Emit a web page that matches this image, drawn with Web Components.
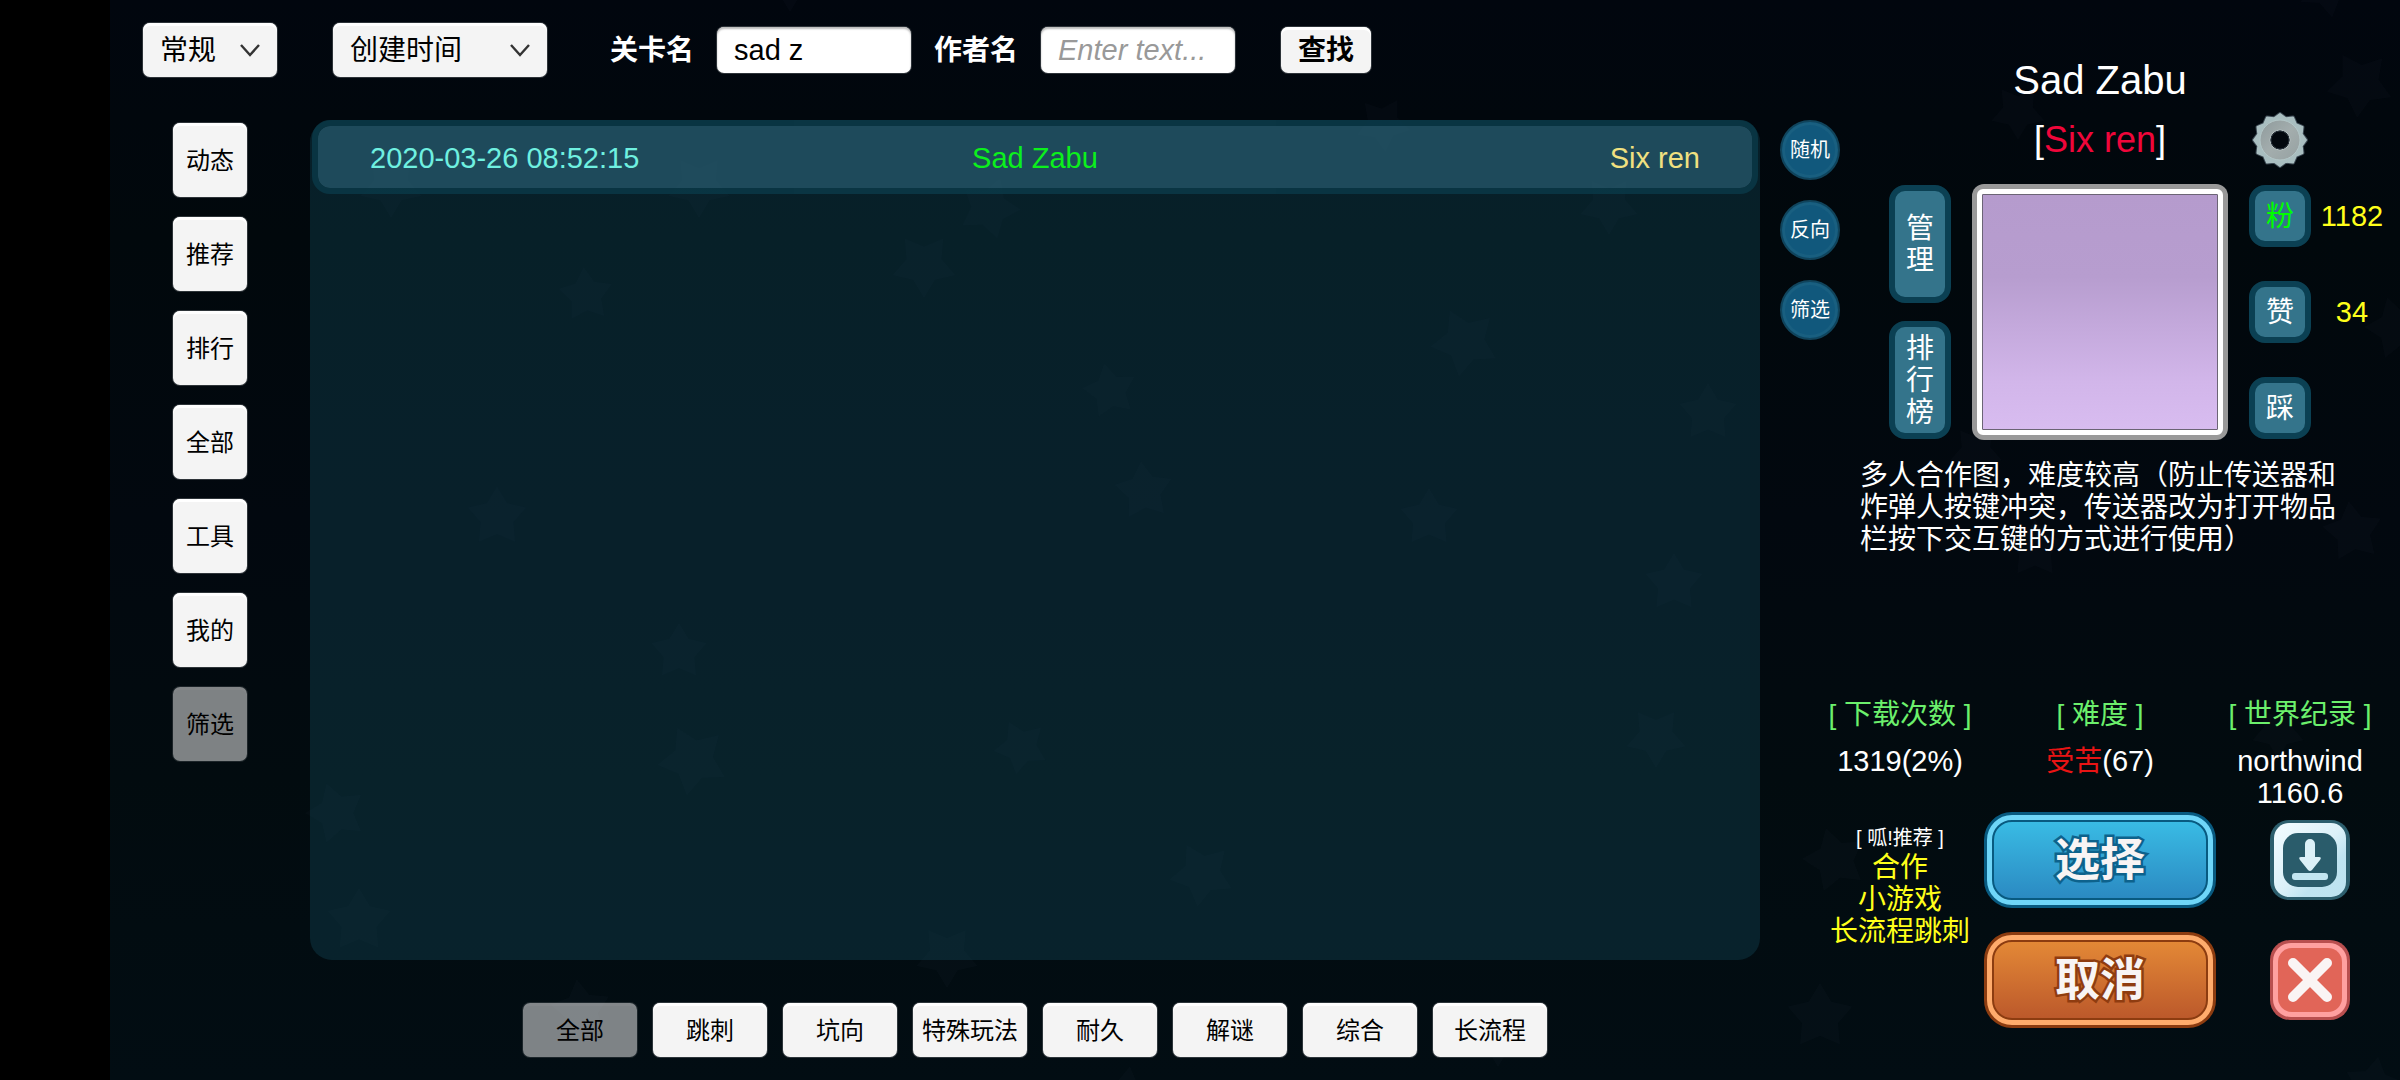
<!DOCTYPE html>
<html lang="zh-CN">
<head>
<meta charset="utf-8">
<meta name="viewport" content="width=device-width, initial-scale=1">
<title>关卡列表</title>
<style>
  body {
    margin: 0;
    background: #000;
    color: #fff;
    font: 28px/32px "Liberation Sans", "Noto Sans CJK SC", sans-serif;
  }
</style>
</head>
<body>
<level-browser>
  <search-bar slot="search"></search-bar>

  <menu-bar slot="nav" direction="column">
    <menu-button>动态</menu-button>
    <menu-button>推荐</menu-button>
    <menu-button>排行</menu-button>
    <menu-button>全部</menu-button>
    <menu-button>工具</menu-button>
    <menu-button>我的</menu-button>
    <menu-button active>筛选</menu-button>
  </menu-bar>

  <level-list slot="list"></level-list>

  <menu-bar slot="tabs">
    <menu-button active>全部</menu-button>
    <menu-button>跳刺</menu-button>
    <menu-button>坑向</menu-button>
    <menu-button>特殊玩法</menu-button>
    <menu-button>耐久</menu-button>
    <menu-button>解谜</menu-button>
    <menu-button>综合</menu-button>
    <menu-button>长流程</menu-button>
  </menu-bar>

  <div slot="tools">
    <round-button>随机</round-button>
    <round-button>反向</round-button>
    <round-button>筛选</round-button>
  </div>

  <level-profile slot="profile" name="Sad Zabu" author="Six ren">
    <tile-button slot="left" tall>管理</tile-button>
    <tile-button slot="left" tall>排行榜</tile-button>
    <tile-button slot="votes" count="1182" style="--tile-color: #00ff00">粉</tile-button>
    <tile-button slot="votes" count="34">赞</tile-button>
    <tile-button slot="votes">踩</tile-button>
    多人合作图，难度较高（防止传送器和炸弹人按键冲突，传送器改为打开物品栏按下交互键的方式进行使用）
  </level-profile>

  <level-stats slot="stats"></level-stats>
</level-browser>

<script>
const define = (name, html, setup) => {
  const template = document.createElement('template');
  template.innerHTML = html;
  customElements.define(name, class extends HTMLElement {
    constructor() {
      super();
      this.attachShadow({ mode: 'open' });
      this.shadowRoot.appendChild(template.content.cloneNode(true));
    }

    connectedCallback() {
      if (setup) setup(this, this.shadowRoot);
    }
  });
};

// centre x, centre y, radius, rotation
const STARS = [
  [790, -16, 28, 180], [2327, -12, 30, 170], [2360, 84, 34, 185], [2018, 112, 28, 180],
  [1383, 124, 28, 175], [391, 186, 32, 180], [699, 186, 32, 180], [989, 208, 32, 165],
  [1609, 205, 30, 180], [924, 265, 33, 180], [586, 295, 28, -5], [1465, 342, 35, 190],
  [1110, 391, 28, -12], [1708, 413, 30, 0], [2396, 328, 32, 200], [1144, 491, 30, -6],
  [1429, 518, 30, 0], [497, 517, 31, 0], [1976, 452, 27, 180], [2353, 532, 31, -8],
  [2035, 549, 30, 0], [1674, 583, 30, 0], [679, 652, 29, 0], [2278, 732, 27, 180],
  [1656, 737, 31, 180], [1021, 747, 28, 190], [693, 760, 36, 190], [336, 813, 31, 198],
  [1835, 860, 33, 200], [1202, 874, 33, 188], [359, 921, 33, 0], [947, 956, 32, 180],
  [581, 1010, 31, -8], [1820, 1017, 34, 0], [1498, 1038, 29, 180], [1126, 1094, 28, 8],
  [2373, 1086, 30, 10]
];

const starPoints = [...Array(10)].map((_, i) => {
  const r = i % 2 ? 0.56 : 1;
  const a = (i * 36 - 90) * Math.PI / 180;
  return `${(r * Math.cos(a)).toFixed(3)},${(r * Math.sin(a)).toFixed(3)}`;
}).join(' ');

define('starry-sky', `
  <style>
    :host { display: block; overflow: hidden; background: linear-gradient(#01060e, #01080c 22%, #02080f 48%, #020b0f 72%, #020d13); }
    svg { display: block; width: 100%; height: 100%; }
    polygon { fill: #9fb4d0; fill-opacity: .025; stroke: none; }
  </style>
  <svg viewBox="110 0 2290 1080" preserveAspectRatio="xMidYMid slice" aria-hidden="true"></svg>
`, (el, root) => {
  root.querySelector('svg').innerHTML = STARS.map(([x, y, r, a]) =>
    `<polygon points="${starPoints}" transform="translate(${x} ${y}) rotate(${a}) scale(${r})"/>`).join('');
});

define('level-browser', `
  <style>
    :host {
      position: relative;
      box-sizing: border-box;
      display: grid;
      grid-template-columns: 200px minmax(0, 1fr) 640px;
      grid-template-rows: 120px minmax(0, 1fr) 120px;
      min-height: 100vh;
      padding-left: 110px;
    }
    /* backdrop behind everything except the notch strip */
    starry-sky { position: absolute; inset: 0 0 0 110px; z-index: -1; }
    .search { grid-column: 1 / 3; }
    .tabs { grid-column: 2; grid-row: 3; display: flex; align-items: center; justify-content: center; padding-top: 20px; }
    .list { grid-column: 2; grid-row: 2; display: grid; }
    .nav { grid-column: 1; grid-row: 2; padding: 3px 0 0 63px; }
    .side { grid-column: 3; grid-row: 1 / 4; }
    .top { display: flex; }
    .tools { flex: 0 0 80px; padding: 120px 0 0 20px; box-sizing: border-box; }
    .profile { flex: 1; }
  </style>
  <starry-sky></starry-sky>
  <div class="search"><slot name="search"></slot></div>
  <nav class="nav"><slot name="nav"></slot></nav>
  <main class="list"><slot name="list"></slot></main>
  <div class="tabs"><slot name="tabs"></slot></div>
  <aside class="side">
    <div class="top">
      <div class="tools"><slot name="tools"></slot></div>
      <div class="profile"><slot name="profile"></slot></div>
    </div>
    <slot name="stats"></slot>
  </aside>
`);

define('search-bar', `
  <style>
    :host { display: block; }
    form { display: flex; align-items: center; padding: 23px 0 0 33px; }
    .select { position: relative; margin-right: 56px; }
    select, input, button {
      box-sizing: border-box;
      margin: 0;
      border: 0;
      border-radius: 7px;
      font: inherit;
      color: #000;
      background: #f4f4f4;
      box-shadow: 0 0 0 1px rgba(90, 96, 100, .5), inset 0 3px #fff;
    }
    select { display: block; appearance: none; height: 54px; padding: 2px 17px 0; }
    .mode { width: 134px; }
    .order { width: 214px; }
    .select svg { position: absolute; right: 17px; top: 21px; pointer-events: none; }
    label { font-weight: bold; margin-right: 23px; padding-top: 2px; }
    .select + label { margin-left: 7px; }
    input {
      width: 194px; height: 46px; padding: 0 17px; margin-right: 23px;
      background: #fff; font-size: 29px;
      box-shadow: 0 0 0 1px rgba(90, 96, 100, .5), inset 0 2px 2px #bbb;
    }
    input::placeholder { color: #999; font-style: italic; opacity: 1; }
    button { width: 90px; height: 46px; padding: 2px 0 0; margin-left: 23px; font-weight: bold; }
  </style>
  <form>
    <div class="select">
      <select class="mode" aria-label="模式"><option>常规</option></select>
      <svg width="20" height="14" viewBox="0 0 20 14"><path d="M1 1l9 10 9-10" fill="none" stroke="#333" stroke-width="2.4"/></svg>
    </div>
    <div class="select">
      <select class="order" aria-label="排序"><option>创建时间</option></select>
      <svg width="20" height="14" viewBox="0 0 20 14"><path d="M1 1l9 10 9-10" fill="none" stroke="#333" stroke-width="2.4"/></svg>
    </div>
    <label for="level">关卡名</label>
    <input id="level" type="text" value="sad z">
    <label for="author">作者名</label>
    <input id="author" type="text" placeholder="Enter text...">
    <button type="submit">查找</button>
  </form>
`, (el, root) => {
  root.querySelector('form').addEventListener('submit', (event) => event.preventDefault());
});

define('menu-bar', `
  <style>
    :host { display: flex; gap: 16px; --menu-width: 114px; --menu-height: 54px; }
    :host([direction=column]) { flex-direction: column; gap: 20px; --menu-width: 74px; --menu-height: 74px; }
  </style>
  <slot></slot>
`);

define('menu-button', `
  <style>
    :host { display: block; }
    button {
      display: block;
      box-sizing: border-box;
      width: var(--menu-width);
      height: var(--menu-height);
      padding: 2px 0 0;
      border: 0;
      border-radius: 7px;
      font: inherit;
      font-size: 24px;
      white-space: nowrap;
      color: #000;
      background: #f4f4f4;
      box-shadow: 0 0 0 1px rgba(90, 96, 100, .5), inset 0 3px #fff;
    }
    :host([active]) button {
      background: rgba(250, 250, 250, .5);
      box-shadow: 0 0 0 1px rgba(90, 96, 100, .3), inset 0 3px rgba(255, 255, 255, .04);
    }
  </style>
  <button type="button"><slot></slot></button>
`);

define('level-list', `
  <style>
    :host { display: block; box-sizing: border-box; padding: 0 2px; border-radius: 22px; background: rgba(21, 77, 94, .35); }
    table { width: 100%; border-spacing: 0; table-layout: fixed; font-size: 29px; }
    td {
      height: 60px;
      padding: 2px 0 0;
      background: rgba(46, 104, 125, .6);
      background-clip: padding-box;
      border: 0 solid rgba(11, 62, 78, .7);
      border-width: 6px 0;
    }
    td:first-child { border-left-width: 6px; border-radius: 18px 0 0 18px; padding-left: 52px; color: #6ff0e0; }
    td:nth-child(2) { text-align: center; color: #0cf01c; }
    td:last-child { border-right-width: 6px; border-radius: 0 18px 18px 0; padding-right: 52px; text-align: right; color: #f0e080; }
  </style>
  <table>
    <tr><td>2020-03-26 08:52:15</td><td>Sad Zabu</td><td>Six ren</td></tr>
  </table>
`);

define('round-button', `
  <style>
    :host { display: block; margin-bottom: 20px; }
    button {
      display: block;
      width: 60px;
      height: 60px;
      padding: 0;
      border: 2px solid #10445c;
      border-radius: 50%;
      background: #11587c;
      box-shadow: inset 0 0 0 3px #195f80;
      font: inherit;
      font-size: 20px;
      color: #fff;
    }
  </style>
  <button type="button"><slot></slot></button>
`);

define('tile-button', `
  <style>
    :host { display: flex; align-items: center; }
    button {
      flex: none;
      box-sizing: border-box;
      width: 62px;
      height: 62px;
      padding: 2px 11px 0;
      border: 6px solid #0b4053;
      border-radius: 16px;
      background: #34748b;
      font: inherit;
      color: var(--tile-color, #fff);
    }
    :host([tall]) button { height: 118px; }
    output { flex: 1; text-align: center; font-size: 29px; color: #ffff1a; }
  </style>
  <button type="button"><slot></slot></button>
  <output></output>
`, (el, root) => {
  root.querySelector('output').textContent = el.getAttribute('count') || '';
});

const gearPath = [...Array(24)].map((_, i) => {
  const r = i % 2 ? 22.5 : 26;
  const a = (i * 15 - 90) * Math.PI / 180;
  return `${i ? 'L' : 'M'}${(31 + r * Math.cos(a)).toFixed(1)} ${(28 + r * Math.sin(a)).toFixed(1)}`;
}).join('') + 'Z';

define('level-profile', `
  <style>
    :host { display: block; }
    .card {
      display: grid;
      grid-template-columns: 62px 256px 144px;
      column-gap: 21px;
      padding: 56px 0 0 49px;
    }
    h1, h2 { grid-column: 2; margin: 0; font-weight: normal; text-align: center; white-space: nowrap; }
    h1 { font-size: 40px; line-height: 48px; }
    h2 { font-size: 36px; line-height: 56px; margin: 8px 0 16px; }
    h2 span { color: #f0063a; }
    .settings { width: 62px; height: 56px; margin-top: 8px; padding: 0; border: 0; background: none; }
    .settings svg { display: block; }
    .left, .votes { display: flex; flex-direction: column; justify-content: space-between; padding: 1px 0; }
    .left { grid-column: 1; }
    .preview {
      box-sizing: border-box;
      height: 256px;
      padding: 5px;
      border-radius: 12px;
      background: #999;
    }
    .preview div {
      box-sizing: border-box;
      height: 100%;
      border: 5px solid #fff;
      border-radius: 6px;
      background: linear-gradient(#b59bcd, #b79dcf 35%, #d2b6ea 80%, #d8bcf0);
      box-shadow: inset 0 0 0 1px #6b6475;
    }
    p { width: 480px; min-height: 239px; margin: 20px 0 0 20px; }
  </style>
  <div class="card">
    <h1></h1>
    <h2>[<span></span>]</h2>
    <button class="settings" type="button" aria-label="设置">
      <svg width="62" height="56" viewBox="0 0 62 56">
        <defs>
          <linearGradient id="face" x2="1" y2="1"><stop offset="0" stop-color="#8f9a9c"/><stop offset=".5" stop-color="#a3adad"/><stop offset="1" stop-color="#96a1a2"/></linearGradient>
        </defs>
        <path d="${gearPath}" fill="none" stroke="#3a4650" stroke-width="4" stroke-linejoin="round"/>
        <path d="${gearPath}" fill="#a9bec0" stroke="#a9bec0" stroke-width="2" stroke-linejoin="round"/>
        <circle cx="31" cy="28" r="20" fill="url(#face)" stroke="#b4c7c8"/>
        <circle cx="31" cy="28" r="10" fill="#02070d" stroke="#b9c4c5"/>
        <circle cx="31" cy="28" r="9" fill="none" stroke="#2a333c"/>
      </svg>
    </button>
    <div class="left"><slot name="left"></slot></div>
    <div class="preview"><div></div></div>
    <div class="votes"><slot name="votes"></slot></div>
  </div>
  <p><slot></slot></p>
`, (el, root) => {
  root.querySelector('h1').textContent = el.getAttribute('name');
  root.querySelector('h2 span').textContent = el.getAttribute('author');
});

define('action-button', `
  <style>
    :host { display: block; --edge: #085a80; --ring: #6fd6f8; --from: #39bbe4; --to: #2b8ac2; --ink: #0d628c; }
    :host([kind=cancel]) { --edge: #8c3c10; --ring: #ffac6c; --from: #e38836; --to: #bc592b; --ink: #8f3c10; }
    button {
      display: block;
      width: 232px;
      height: 96px;
      padding: 5px;
      border: 3px solid var(--edge);
      border-radius: 28px;
      background: var(--ring);
      font: bold 45px/46px "Noto Sans CJK SC", sans-serif;
      color: #f8f4f4;
    }
    span {
      display: grid;
      place-items: center;
      box-sizing: border-box;
      height: 100%;
      padding-bottom: 6px;
      border: 2px solid var(--edge);
      border-radius: 20px;
      background: linear-gradient(var(--from), var(--to));
      -webkit-text-stroke: 5px var(--ink);
      stroke-linejoin: round;
      paint-order: stroke fill;
    }
  </style>
  <button type="button"><span><slot></slot></span></button>
`);

define('level-stats', `
  <style>
    :host { display: block; padding-left: 40px; }
    dl, .actions { display: grid; grid-template-columns: repeat(3, minmax(0, 1fr)); margin: 0; text-align: center; }
    dt { color: #6cf06c; }
    dd { margin: 14px 0 3px; min-height: 64px; font-size: 29px; }
    dd div { white-space: nowrap; }
    .hard { font-size: 28px; color: #e81414; }
    .tags { padding-top: 12px; color: #ffff1a; white-space: nowrap; }
    .tags h3 { margin: 0; font-size: 20px; line-height: 28px; font-weight: normal; color: #fff; }
    .tags ul { margin: 0; padding: 0; list-style: none; }
    .main, .icons { display: flex; flex-direction: column; align-items: center; gap: 24px; }
    .icons { gap: 40px; padding: 8px 0 0 20px; }
    .icons button { width: 80px; height: 80px; padding: 0; border: 0; background: none; }
    .icons svg { display: block; }
  </style>
  <dl>
    <div><dt>[ 下载次数 ]</dt><dd>1319(2%)</dd></div>
    <div><dt>[ 难度 ]</dt><dd><span class="hard">受苦</span>(67)</dd></div>
    <div><dt>[ 世界纪录 ]</dt><dd><div>northwind</div><div>1160.6</div></dd></div>
  </dl>
  <div class="actions">
    <div class="tags">
      <h3>[ 呱!推荐 ]</h3>
      <ul><li>合作</li><li>小游戏</li><li>长流程跳刺</li></ul>
    </div>
    <div class="main">
      <action-button>选择</action-button>
      <action-button kind="cancel">取消</action-button>
    </div>
    <div class="icons">
      <button type="button" aria-label="下载">
        <svg width="80" height="80" viewBox="0 0 80 80">
          <defs>
            <linearGradient id="ice" y2="1"><stop offset="0" stop-color="#f2fbff"/><stop offset=".5" stop-color="#dcf1f8"/><stop offset=".7" stop-color="#bfe4f1"/><stop offset="1" stop-color="#bde3f0"/></linearGradient>
          </defs>
          <rect width="80" height="80" rx="19" fill="#2c5e6d"/>
          <rect x="4" y="3" width="72" height="74" rx="15" fill="url(#ice)"/>
          <rect x="13" y="13" width="54" height="54" rx="15" fill="#2a5c6b"/>
          <path d="M35 24a5 5 0 0 1 10 0V37h4q3 0 1 3l-8 10q-2 2-4 0l-8-10q-2-3 1-3h4Z" fill="#dcf1f8"/>
          <rect x="22" y="53" width="36" height="7" rx="3" fill="#c3e6f1"/>
        </svg>
      </button>
      <button type="button" aria-label="关闭">
        <svg width="80" height="80" viewBox="0 0 80 80">
          <rect width="80" height="80" rx="20" fill="#b94f4f"/>
          <rect x="3" y="3" width="74" height="74" rx="18" fill="#ffa0a0"/>
          <rect x="8" y="8" width="64" height="64" rx="14" fill="#e16558"/>
          <path d="M23 23L57 57M57 23L23 57" stroke="#faf4f4" stroke-width="10" stroke-linecap="round"/>
        </svg>
      </button>
    </div>
  </div>
`);
</script>
</body>
</html>
